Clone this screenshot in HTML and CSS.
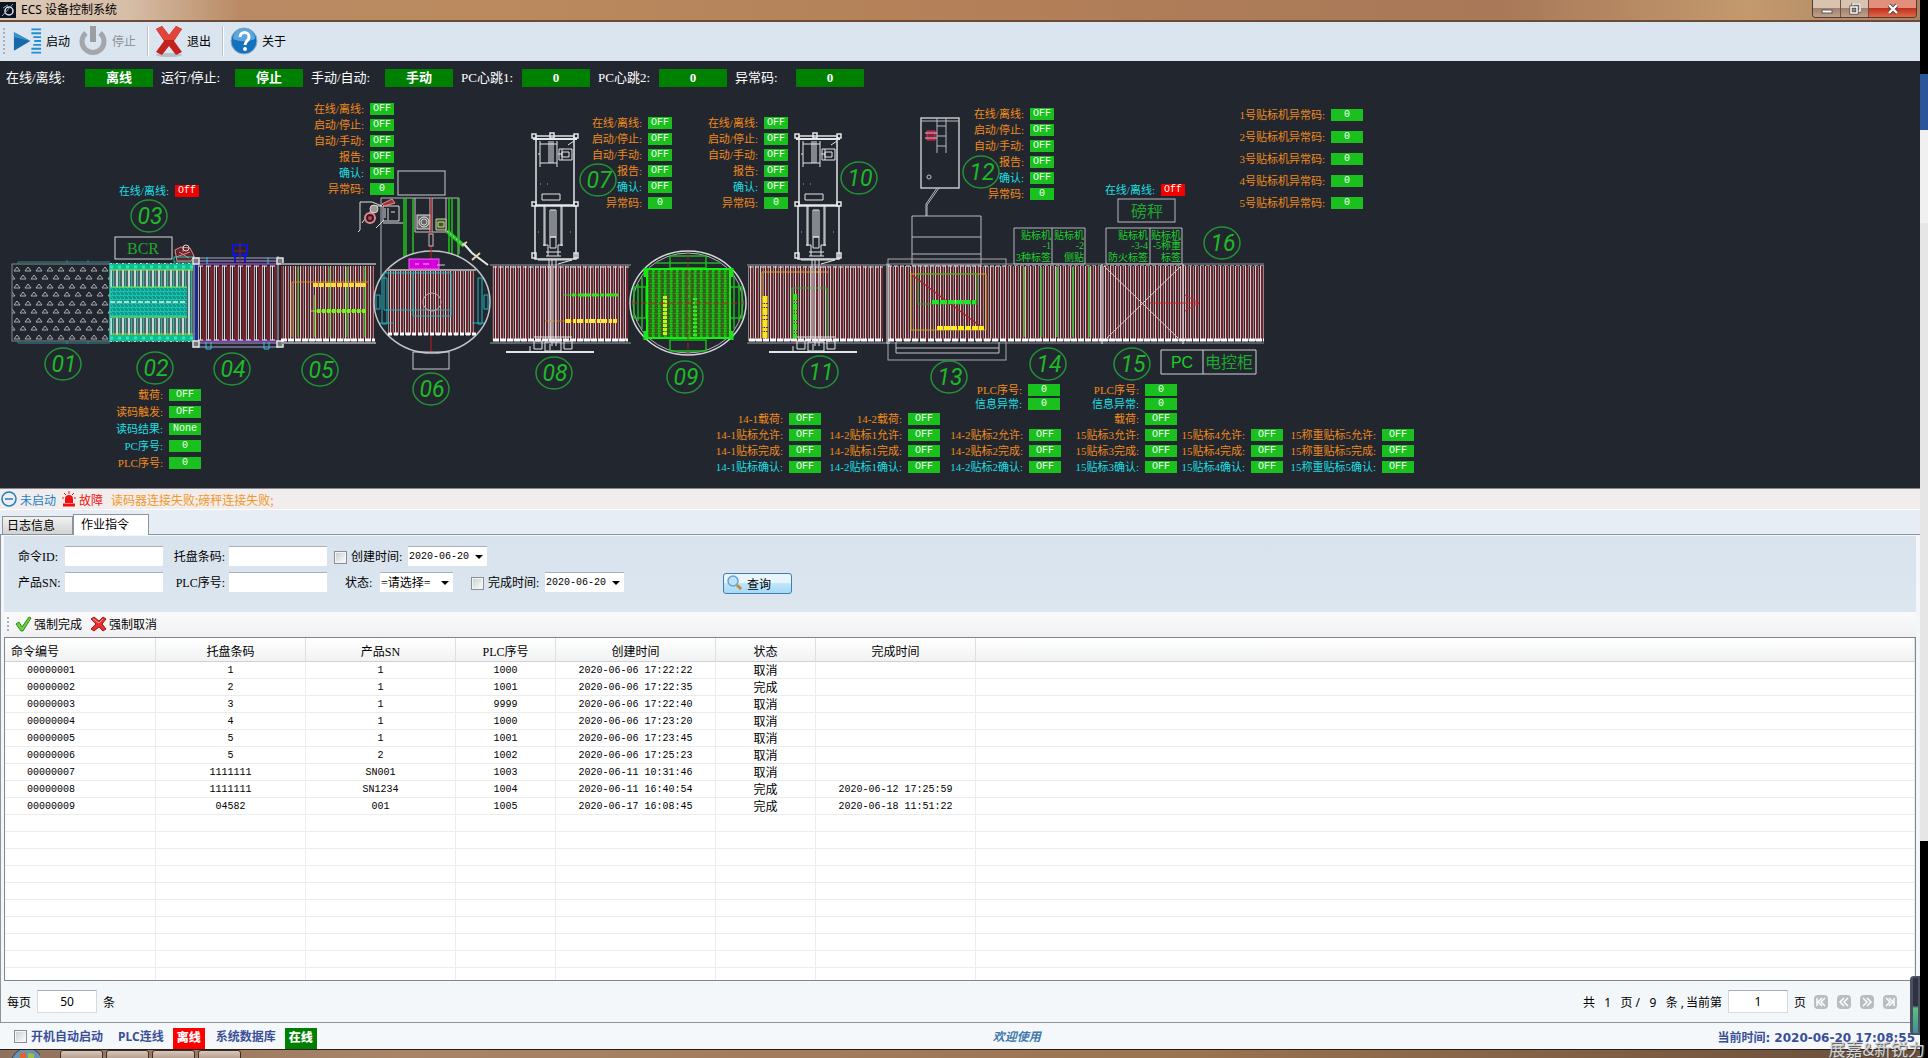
FILE: index.html
```html
<!DOCTYPE html>
<html lang="zh-CN">
<head>
    <meta charset="UTF-8">
    <meta name="viewport" content="width=device-width, initial-scale=1.0">
    <title>ECS 设备控制系统</title>
    <link rel="stylesheet" href="styles.css">
</head>
<body>
<div class="desktop">
    <div class="window">
        <header class="titlebar">
            <svg class="app-icon" width="16" height="16" viewBox="0 0 16 16"><rect width="16" height="16" fill="#0c1420"/><circle cx="9" cy="9" r="4" fill="none" stroke="#dfe6ee" stroke-width="1.5"/><path d="M2 14L13 2M3 6l5-3" stroke="#8fa2b8"/></svg>
            <h1>ECS 设备控制系统</h1>
            <div class="win-buttons">
                <button class="win-min" aria-label="最小化"><svg width="12" height="12" viewBox="0 0 12 12"><rect x="1" y="7" width="10" height="3" fill="#fff" stroke="#555"/></svg></button>
                <button class="win-max" aria-label="还原"><svg width="12" height="12" viewBox="0 0 12 12" fill="none"><path d="M4 3V1h7v7H9" stroke="#555" stroke-width="3"/><path d="M4 3V1h7v7H9" stroke="#fff" stroke-width="1.5"/><rect x="2" y="4" width="6" height="6" stroke="#444" stroke-width="3"/><rect x="2" y="4" width="6" height="6" stroke="#fff" stroke-width="1.5"/></svg></button>
                <button class="win-close" aria-label="关闭"><svg width="12" height="12" viewBox="0 0 12 12"><path d="M2 2l8 8M10 2l-8 8" stroke="#5a3a3a" stroke-width="4"/><path d="M2 2l8 8M10 2l-8 8" stroke="#fff" stroke-width="2.4"/></svg></button>
            </div>
        </header>

        <nav class="toolbar">
            <span class="grip"></span>
            <button>
                <svg width="29" height="28" viewBox="0 0 30 28"><path d="M1 5l17 9-17 10z" fill="#1668a8"/><path d="M1 5l17 9-17-4z" fill="#3b90cc"/><path d="M19 2h10M19 6h10M21 10h8M22 14h7M21 18h8M19 22h10M19 26h10" stroke="#1f8fd0" stroke-width="2"/></svg>
                启动
            </button>
            <button class="off" disabled>
                <svg width="30" height="30" viewBox="0 0 30 30" fill="none"><path d="M8 7a11 11 0 1 0 14 0" stroke="#a3a6aa" stroke-width="5"/><path d="M15 0v16" stroke="#9a9da1" stroke-width="6"/></svg>
                停止
            </button>
            <span class="sep"></span>
            <button>
                <svg width="28" height="32" viewBox="0 0 28 32"><ellipse cx="14" cy="30" rx="13" ry="2" fill="#b9bfc6"/><path d="M1 4l6-3 7 9 7-9 6 3-8 12 8 11-6 3-7-9-7 9-6-3 8-11z" fill="#c3211c"/><path d="M1 4l6-3 7 9 7-9 6 3-8 11H9z" fill="#e0443a"/></svg>
                退出
            </button>
            <span class="sep"></span>
            <button>
                <svg width="28" height="28" viewBox="0 0 28 28"><circle cx="14" cy="14" r="13" fill="#1471bd" stroke="#8fa9c0"/><path d="M3 12a11 11 0 0 1 22 0c-7 3-15 3-22 0z" fill="#5ba6de"/><path d="M10 10c0-6 9-6 9 0 0 4-4 4-4 8" fill="none" stroke="#fff" stroke-width="3"/><circle cx="15" cy="22" r="2" fill="#fff"/></svg>
                关于
            </button>
        </nav>

        <main class="monitor">
            <div class="stats">
                <div class="stat"><span>在线/离线:</span><b>离线</b></div>
                <div class="stat"><span>运行/停止:</span><b>停止</b></div>
                <div class="stat"><span>手动/自动:</span><b>手动</b></div>
                <div class="stat short"><span>PC心跳1:</span><b>0</b></div>
                <div class="stat short"><span>PC心跳2:</span><b>0</b></div>
                <div class="stat short"><span>异常码:</span><b>0</b></div>
            </div>

            <!-- conveyor line layout -->
            <svg class="line" width="1420" height="427" viewBox="0 61 1420 427">
                <defs>
                    <pattern id="rollers" width="5" height="80" patternUnits="userSpaceOnUse">
                        <rect width="5" height="80" fill="#30242b"/>
                        <rect x="0" width="1" height="80" fill="#d6cdcf"/>
                        <rect x="1" width="2" height="80" fill="#76252f"/>
                        <rect x="3" width="1" height="80" fill="#938489"/>
                    </pattern>
                    <pattern id="rollers-wide" width="8" height="80" patternUnits="userSpaceOnUse">
                        <rect width="8" height="80" fill="#2b2329"/>
                        <rect x="0" width="1" height="80" fill="#e4e0e1"/>
                        <rect x="2" width="4" height="80" fill="#6d2630"/>
                        <rect x="6" width="1" height="80" fill="#b5abae"/>
                    </pattern>
                    <pattern id="tri" x="12" y="265" width="11" height="17" patternUnits="userSpaceOnUse">
                        <path d="M2 6l3-4 3 4zM-3 14l3-4 3 4zM8 14l3-4 3 4z" fill="none" stroke="#a9acb0"/>
                    </pattern>
                    <pattern id="strips" x="110" width="6" height="80" patternUnits="userSpaceOnUse">
                        <rect width="6" height="80" fill="#4b6468"/>
                        <rect width="2" height="80" fill="#c9d6d2"/>
                        <rect x="3" width="1" height="80" fill="#22b89a"/>
                    </pattern>
                    <pattern id="mesh" x="646" y="268" width="6" height="5" patternUnits="userSpaceOnUse">
                        <rect width="6" height="5" fill="#217318"/>
                        <path d="M0 0h6M0 3h3M1 0v5" stroke="#14e014"/>
                        <path d="M4 0v5" stroke="#6a3a2a"/>
                    </pattern>
                    <pattern id="teal" width="4" height="4" patternUnits="userSpaceOnUse">
                        <rect width="4" height="4" fill="#16c4a8"/>
                        <path d="M0 0h3M1 2h3" stroke="#0e6a78"/>
                    </pattern>

                    <!-- lifting labeler, stations 07 and 10 -->
                    <g id="lift" fill="none" stroke="#e4e6e8">
                        <path d="M536 136h38v69h-38zM535 206h41v53h-41z" stroke-width="1.5"/>
                        <path d="M533 139h44" stroke-width="2"/>
                        <path d="M532 134h4v4h-4zM574 134h4v4h-4zM550 133h4v5h-4zM532 202h4v4h-4zM574 202h4v4h-4zM532 253h4v5h-4zM574 253h4v5h-4z" stroke-width="1.5"/>
                        <path d="M540 141v26M557 141v26M540 144h17M540 163h17M549 141v22M551 141v22M553 141v22M538 154h2"/>
                        <path d="M559 149h13v11h-13zM562 152h7v5h-7zM562 149v11M568 145l6-4M558 154h4"/>
                        <path d="M542 194h18v6h-18z"/>
                        <path d="M544 206v40M562 206v40M550 210h6v27h-6zM552 210v27M554 210v27M545 206v40M561 206v40M550 237h6v11h-6z"/>
                        <path d="M543 245h5v11M563 245h-5v11M546 252h15M546 256h15M538 260h34M549 260v80M552 260v86M556 260v86M572 260l-14 4"/>
                        <path d="M534 337h38M534 341h8v8h-8zM564 341h8v8h-8zM545 342h16v9h-16zM550 344v6M530 346v7"/>
                        <path d="M506 352h88" stroke-width="2"/>
                        <path d="M540 184h1M547 184h1M570 232h1M538 232h1" stroke="#aaa"/>
                    </g>
                </defs>

                <!-- 01 -->
                <rect x="12" y="264" width="98" height="77" fill="url(#tri)" stroke="#85888d"/>
                <path d="M18 264v-2h92M18 341v2h92M67 260v3M88 260v3M67 341v3M88 341v3" fill="none" stroke="#2c8b8f"/>

                <!-- 02 -->
                <rect x="110" y="263" width="83" height="79" fill="url(#strips)"/>
                <rect x="110" y="264" width="83" height="6" fill="#10c08c"/>
                <rect x="110" y="335" width="83" height="6" fill="#10c08c"/>
                <path d="M110 267h83M110 338h83" stroke="#22e8d0" stroke-width="3" stroke-dasharray="3 5"/>
                <path d="M110 270h83M110 334h83" stroke="#b6d838"/>
                <rect x="110" y="287" width="77" height="31" fill="url(#teal)"/>
                <path d="M110 287h77M110 317h77" stroke="#7fe84a"/>
                <path d="M110 302h77" stroke="#b8d8c8" stroke-width="2" stroke-dasharray="5 2"/>
                <path d="M110 263v79" stroke="#22d8c0"/>
                <rect x="115" y="237" width="57" height="22" fill="none" stroke="#d5d7da"/>
                <path d="M175 250l6-3 9 1 4 8-3 5h-14zM179 252l10 6M183 247v5M176 257l14-5" fill="#5c2530" stroke="#f08a8a"/>
                <circle cx="186" cy="248" r="3" fill="none" stroke="#e8d8d8"/>
                <path d="M174 257h20v5h-20z" fill="none" stroke="#20c8a8"/>

                <!-- 04 -->
                <rect x="194" y="262" width="4" height="80" fill="#1c2a8c"/>
                <rect x="198" y="266" width="79" height="74" fill="url(#rollers-wide)"/>
                <path d="M196 258h82M196 261h82M196 343h82M196 347h82" stroke="#a9a0d8"/>
                <path d="M198 264h80M198 341h80" stroke="#7a3a9c" stroke-width="2"/>
                <path d="M198 266h79M198 340h79" stroke="#eee" stroke-dasharray="5 3"/>
                <path d="M278 256v92M194 256v92" stroke="#b8bcc8"/>
                <path d="M193 258h6v6h-6zM277 258h6v6h-6zM193 341h6v6h-6zM277 341h6v6h-6z" fill="#777" stroke="#e4e4e4" stroke-width="1.5"/>
                <path d="M206 342v7h5v-7M264 342v7h5v-7M207 257v7M268 257v7" fill="none" stroke="#2cc8d8"/>
                <path d="M233 245h14v10h-14zM235 255v7M245 255v7" fill="none" stroke="#1414d0" stroke-width="2"/>
                <path d="M240 243v20M234 251h12" stroke="#7a1c50"/>

                <!-- 05 -->
                <rect x="281" y="266" width="94" height="75" fill="url(#rollers)"/>
                <path d="M281 264h95M281 343h95" stroke="#8e9297" stroke-width="2"/>
                <path d="M281 340h94" stroke="#fff" stroke-width="3" stroke-dasharray="6 1"/>
                <path d="M298 267v70M330 267v70M347 267v70M365 267v70" stroke="#33d81e"/>
                <path d="M292 337v-55h76" fill="none" stroke="#d8851c"/>
                <path d="M313 285h53" stroke="#ffd83c" stroke-width="4" stroke-dasharray="5 1"/>
                <path d="M311 311h55M315 295v42" fill="none" stroke="#8af028"/>
                <path d="M317 311h49" stroke="#7af028" stroke-width="4" stroke-dasharray="4 1"/>

                <!-- 06 wrapping turntable -->
                <rect x="398" y="171" width="47" height="24" fill="none" stroke="#c8cacd"/>
                <path d="M381 290v-92h78v56" fill="none" stroke="#b4b7bb"/>
                <path d="M404 198v59M406 198v59M413 198v58M449 198v56M452 198v56M458 198v58" stroke="#22c41e" stroke-width="1.5"/>
                <path d="M415 198v34h31v-34M430 198v34M432 198v34" fill="none" stroke="#d7c3c3"/>
                <rect x="417" y="215" width="13" height="14" fill="#666" stroke="#ddd"/>
                <circle cx="424" cy="222" r="5" fill="none" stroke="#e8e8e8"/>
                <circle cx="424" cy="222" r="3" fill="none" stroke="#d0d0d0"/>
                <path d="M436 219h10v11h-10zM438 222h6v5h-6z" fill="#46542c" stroke="#c5d8a0"/>
                <path d="M360 202h12l10 4h-8l-12 17 M360 202v28l-2 2" fill="none" stroke="#d9e4dc"/>
                <circle cx="370" cy="218" r="5" fill="#401820" stroke="#d88a94" stroke-width="2"/>
                <circle cx="370" cy="218" r="2" fill="#b8485c"/>
                <circle cx="374" cy="209" r="4" fill="#999" stroke="#f4caca"/>
                <path d="M383 206h16v15h-16zM385 208v10M388 208v12M391 212h4M383 223h20M376 228l8-8" fill="none" stroke="#ddd"/>
                <path d="M382 204l10-5 3 4-11 3z" fill="#9c3038" stroke="#f09090"/>
                <ellipse cx="432" cy="302" rx="58" ry="51" fill="#22272f" stroke="#c2c4c8" stroke-width="1.5"/>
                <path d="M431 198v154" stroke="#c8161c"/>
                <rect x="388" y="271" width="87" height="64" fill="url(#rollers)"/>
                <path d="M386 270h90" stroke="#9da0a5" stroke-width="2"/>
                <path d="M388 334h88" stroke="#fff" stroke-width="3" stroke-dasharray="4 2"/>
                <rect x="429" y="234" width="4" height="12" fill="#22272f" stroke="#d6b8b8"/>
                <rect x="409" y="259" width="30" height="10" fill="#d400dc" stroke="#ff5cff"/>
                <path d="M415 264h4M423 264h6M437 265h8" stroke="#f6b0f6"/>
                <path d="M384 273h67v37h-67zM413 273v43h38v-6M382 278h5v46h-5zM478 278h4v46h-4zM376 295h4v14h-4zM484 295h4v14h-4zM380 323h13M472 323h12" fill="none" stroke="#1fb4bc"/>
                <circle cx="432" cy="302" r="9" fill="none" stroke="#c9a8a0"/>
                <rect x="413" y="352" width="36" height="17" fill="none" stroke="#c8cacd"/>
                <path d="M447 231l17 15" stroke="#25c42a" stroke-width="4"/>
                <path d="M447 231l17 15" stroke="#b8dcb0" stroke-dasharray="2 2"/>
                <path d="M464 244l8 9 4 3 12 9" fill="none" stroke="#e8ece0" stroke-width="2"/>
                <path d="M472 260l8-7M462 245l5-3" stroke="#e8d0a0" stroke-width="2"/>

                <!-- 07 / 08 -->
                <rect x="492" y="266" width="136" height="75" fill="url(#rollers)"/>
                <path d="M490 265h141M490 343h141" stroke="#9da0a5"/>
                <path d="M493 267h136" stroke="#ddd" stroke-dasharray="4 2"/>
                <path d="M493 340h135" stroke="#fff" stroke-width="3" stroke-dasharray="6 1"/>
                <path d="M563 295h54" stroke="#35d41c"/>
                <path d="M572 295h46" stroke="#35e41c" stroke-width="3" stroke-dasharray="4 2 7 1"/>
                <path d="M545 321h72" stroke="#b06a18"/>
                <path d="M565 321h52" stroke="#ffe63a" stroke-width="4" stroke-dasharray="6 2 3 1"/>
                <use href="#lift"/>

                <!-- 09 rotary table -->
                <ellipse cx="688" cy="303" rx="58" ry="52" fill="none" stroke="#d6d8da" stroke-width="1.5"/>
                <ellipse cx="688" cy="303" rx="55" ry="50" fill="none" stroke="#b4b6ba"/>
                <path d="M670 256h36v12h-36zM656 263h64M670 340h36v11h-36zM634 287h12v31h-12zM730 287h12v31h-12zM642 277v52M734 277v52M638 284v37M739 284v37" fill="none" stroke="#1fb81e" stroke-width="1.5"/>
                <rect x="647" y="269" width="83" height="69" fill="url(#mesh)" stroke="#12f012" stroke-width="2"/>
                <path d="M645 268v9M645 331v9M732 268v9M732 331v9" stroke="#15e815" stroke-width="3"/>
                <path d="M665 296v40" stroke="#c8f01c" stroke-width="4" stroke-dasharray="3 1"/>
                <path d="M695 298v38" stroke="#2cf020" stroke-width="4" stroke-dasharray="2 2"/>
                <path d="M632 303h112M688 253v100" stroke="#a32a1c" stroke-dasharray="6 3"/>

                <!-- 10 / 11 -->
                <rect x="748" y="266" width="135" height="75" fill="url(#rollers)"/>
                <path d="M747 265h139M747 343h139" stroke="#9da0a5"/>
                <path d="M749 267h134" stroke="#ddd" stroke-dasharray="4 2"/>
                <path d="M749 340h134" stroke="#fff" stroke-width="3" stroke-dasharray="6 1"/>
                <path d="M762 338v-66h66" fill="none" stroke="#d8a020"/>
                <path d="M765 296v42" stroke="#f4e820" stroke-width="5" stroke-dasharray="7 1 3 1"/>
                <path d="M792 338v-50h35v50" fill="none" stroke="#22a81e"/>
                <path d="M795 294v44" stroke="#28e81e" stroke-width="4" stroke-dasharray="6 1 2 1"/>
                <use href="#lift" x="263"/>

                <!-- 12 / 13 -->
                <rect x="921" y="118" width="38" height="70" fill="none" stroke="#c2c4c8" stroke-width="1.5"/>
                <path d="M937 118v35M946 118v35M921 121h38M937 126h9M937 136h9M937 146h9M939 188l-12 17v11M937 188l-11 16v12" fill="none" stroke="#b8babe"/>
                <path d="M927 131h8v9h-8z" fill="#8c1c3c" stroke="#d8305c"/>
                <path d="M925 133h12M925 138h12" stroke="#e8b8c4"/>
                <circle cx="929" cy="177" r="2" fill="none" stroke="#c2c4c8"/>
                <path d="M912 216h69v49h-69zM912 237h69M912 254h69" fill="none" stroke="#b8babe"/>
                <rect x="888" y="259" width="118" height="101" fill="none" stroke="#a8abb0"/>
                <rect x="887" y="266" width="121" height="75" fill="url(#rollers)"/>
                <path d="M886 264h378M886 343h378" stroke="#8e9297"/>
                <path d="M888 266h376" stroke="#e4e4e4" stroke-dasharray="4 2"/>
                <path d="M888 340h120" stroke="#fff" stroke-width="3" stroke-dasharray="6 2"/>
                <path d="M896 342v11h103v-11M896 348h103" fill="none" stroke="#c2c4c8"/>
                <path d="M887 264v80M889 264v80" stroke="#d6d8da"/>
                <rect x="911" y="274" width="75" height="56" fill="none" stroke="#c8a418"/>
                <rect x="918" y="274" width="59" height="30" fill="none" stroke="#22a81e"/>
                <path d="M912 275l72 54" stroke="#b01c28" stroke-width="1.5"/>
                <path d="M932 302h44" stroke="#1ee82c" stroke-width="4" stroke-dasharray="7 1"/>
                <path d="M937 328h47" stroke="#ffee1e" stroke-width="4" stroke-dasharray="6 1"/>

                <!-- 14 -->
                <rect x="1008" y="266" width="94" height="75" fill="url(#rollers)"/>
                <path d="M1008 340h94" stroke="#fff" stroke-width="3" stroke-dasharray="6 1"/>
                <path d="M1024 267v70M1041 267v70M1057 267v70M1073 267v70M1089 267v70" stroke="#3fc83a" stroke-width="1.5"/>
                <path d="M1014 228h71v36h-71zM1052 228v36" fill="none" stroke="#b4b6ba"/>

                <!-- 15 / 16 -->
                <rect x="1102" y="266" width="162" height="75" fill="url(#rollers)"/>
                <path d="M1102 340h162" stroke="#fff" stroke-width="3" stroke-dasharray="6 1"/>
                <path d="M1102 264v80M1183 264v80" stroke="#eee"/>
                <path d="M1104 266l74 72M1181 266l-74 72" stroke="#dccaca"/>
                <path d="M1150 303h49M1185 295l14 8-14 8" fill="none" stroke="#c8222a"/>
                <path d="M1106 228h76v36h-76zM1150 228v36" fill="none" stroke="#b8babe"/>
                <rect x="1118" y="199" width="57" height="23" fill="none" stroke="#b8babe"/>
                <path d="M1161 350h95v24h-95zM1203 350v24" fill="none" stroke="#d0d2d5"/>

                <g class="box-text">
                    <text class="serif" x="143" y="254">BCR</text>
                    <text class="serif" x="1147" y="217">磅秤</text>
                    <text class="pc" x="1182" y="368">PC</text>
                    <text class="serif" x="1229" y="368">电控柜</text>
                </g>
                <g class="tag-text">
                    <text x="1051" y="239">贴标机</text><text x="1051" y="249">-1</text><text x="1051" y="261">3种标签</text>
                    <text x="1084" y="239">贴标机</text><text x="1084" y="249">-2</text><text x="1084" y="261">侧贴</text>
                    <text x="1148" y="239">贴标机</text><text x="1148" y="249">-3-4</text><text x="1148" y="261">防火标签</text>
                    <text x="1181" y="239">贴标机</text><text x="1181" y="249">-5称重</text><text x="1181" y="261">标签</text>
                </g>

                <g class="station">
                    <ellipse cx="63" cy="364" rx="18" ry="16"/><text x="64" y="372">01</text>
                    <ellipse cx="155" cy="368" rx="18" ry="16"/><text x="156" y="376">02</text>
                    <ellipse cx="149" cy="216" rx="18" ry="16"/><text x="150" y="224">03</text>
                    <ellipse cx="232" cy="369" rx="18" ry="16"/><text x="233" y="377">04</text>
                    <ellipse cx="320" cy="370" rx="18" ry="16"/><text x="321" y="378">05</text>
                    <ellipse cx="431" cy="389" rx="18" ry="16"/><text x="432" y="397">06</text>
                    <ellipse cx="598" cy="180" rx="18" ry="16"/><text x="599" y="188">07</text>
                    <ellipse cx="554" cy="373" rx="18" ry="16"/><text x="555" y="381">08</text>
                    <ellipse cx="685" cy="377" rx="18" ry="16"/><text x="686" y="385">09</text>
                    <ellipse cx="859" cy="178" rx="18" ry="16"/><text x="860" y="186">10</text>
                    <ellipse cx="820" cy="372" rx="18" ry="16"/><text x="821" y="380">11</text>
                    <ellipse cx="981" cy="172" rx="18" ry="16"/><text x="982" y="180">12</text>
                    <ellipse cx="949" cy="377" rx="18" ry="16"/><text x="950" y="385">13</text>
                    <ellipse cx="1048" cy="364" rx="18" ry="16"/><text x="1049" y="372">14</text>
                    <ellipse cx="1132" cy="364" rx="18" ry="16"/><text x="1133" y="372">15</text>
                    <ellipse cx="1222" cy="243" rx="18" ry="16"/><text x="1223" y="251">16</text>
                </g>
            </svg>

            <dl class="io io-03"><dt class="ack">在线/离线:</dt><dd class="bad">Off</dd></dl>
            <dl class="io io-scale"><dt class="ack">在线/离线:</dt><dd class="bad">Off</dd></dl>
            <dl class="io io-06">
                <dt>在线/离线:</dt><dd>OFF</dd>
                <dt>启动/停止:</dt><dd>OFF</dd>
                <dt>自动/手动:</dt><dd>OFF</dd>
                <dt>报告:</dt><dd>OFF</dd>
                <dt class="ack">确认:</dt><dd>OFF</dd>
                <dt>异常码:</dt><dd>0</dd>
            </dl>
            <dl class="io io-07">
                <dt>在线/离线:</dt><dd>OFF</dd>
                <dt>启动/停止:</dt><dd>OFF</dd>
                <dt>自动/手动:</dt><dd>OFF</dd>
                <dt>报告:</dt><dd>OFF</dd>
                <dt class="ack">确认:</dt><dd>OFF</dd>
                <dt>异常码:</dt><dd>0</dd>
            </dl>
            <dl class="io io-10">
                <dt>在线/离线:</dt><dd>OFF</dd>
                <dt>启动/停止:</dt><dd>OFF</dd>
                <dt>自动/手动:</dt><dd>OFF</dd>
                <dt>报告:</dt><dd>OFF</dd>
                <dt class="ack">确认:</dt><dd>OFF</dd>
                <dt>异常码:</dt><dd>0</dd>
            </dl>
            <dl class="io io-12">
                <dt>在线/离线:</dt><dd>OFF</dd>
                <dt>启动/停止:</dt><dd>OFF</dd>
                <dt>自动/手动:</dt><dd>OFF</dd>
                <dt>报告:</dt><dd>OFF</dd>
                <dt class="ack">确认:</dt><dd>OFF</dd>
                <dt>异常码:</dt><dd>0</dd>
            </dl>
            <dl class="io wide io-02">
                <dt>载荷:</dt><dd>OFF</dd>
                <dt>读码触发:</dt><dd>OFF</dd>
                <dt class="ack">读码结果:</dt><dd>None</dd>
                <dt class="ack">PC序号:</dt><dd>0</dd>
                <dt>PLC序号:</dt><dd>0</dd>
            </dl>
            <dl class="io wide io-codes">
                <dt>1号贴标机异常码:</dt><dd>0</dd>
                <dt>2号贴标机异常码:</dt><dd>0</dd>
                <dt>3号贴标机异常码:</dt><dd>0</dd>
                <dt>4号贴标机异常码:</dt><dd>0</dd>
                <dt>5号贴标机异常码:</dt><dd>0</dd>
            </dl>
            <dl class="io wide tight io-14">
                <dt>PLC序号:</dt><dd>0</dd>
                <dt class="ack">信息异常:</dt><dd>0</dd>
            </dl>
            <dl class="io wide tight io-15">
                <dt>PLC序号:</dt><dd>0</dd>
                <dt class="ack">信息异常:</dt><dd>0</dd>
            </dl>
            <dl class="io wide io-14-1">
                <dt>14-1载荷:</dt><dd>OFF</dd>
                <dt>14-1贴标允许:</dt><dd>OFF</dd>
                <dt>14-1贴标完成:</dt><dd>OFF</dd>
                <dt class="ack">14-1贴标确认:</dt><dd>OFF</dd>
            </dl>
            <dl class="io wide io-14-2a">
                <dt>14-2载荷:</dt><dd>OFF</dd>
                <dt>14-2贴标1允许:</dt><dd>OFF</dd>
                <dt>14-2贴标1完成:</dt><dd>OFF</dd>
                <dt class="ack">14-2贴标1确认:</dt><dd>OFF</dd>
            </dl>
            <dl class="io wide io-14-2b">
                <dt>14-2贴标2允许:</dt><dd>OFF</dd>
                <dt>14-2贴标2完成:</dt><dd>OFF</dd>
                <dt class="ack">14-2贴标2确认:</dt><dd>OFF</dd>
            </dl>
            <dl class="io wide io-15-3">
                <dt>载荷:</dt><dd>OFF</dd>
                <dt>15贴标3允许:</dt><dd>OFF</dd>
                <dt>15贴标3完成:</dt><dd>OFF</dd>
                <dt class="ack">15贴标3确认:</dt><dd>OFF</dd>
            </dl>
            <dl class="io wide io-15-4">
                <dt>15贴标4允许:</dt><dd>OFF</dd>
                <dt>15贴标4完成:</dt><dd>OFF</dd>
                <dt class="ack">15贴标4确认:</dt><dd>OFF</dd>
            </dl>
            <dl class="io wide io-15-5">
                <dt>15称重贴标5允许:</dt><dd>OFF</dd>
                <dt>15称重贴标5完成:</dt><dd>OFF</dd>
                <dt class="ack">15称重贴标5确认:</dt><dd>OFF</dd>
            </dl>
        </main>

        <div class="alarm">
            <svg width="16" height="16" viewBox="0 0 16 16" fill="none" stroke="#1b7fc4"><circle cx="8" cy="8" r="7" stroke-width="1.5"/><path d="M4 8h8" stroke-width="1.5"/></svg>
            <span class="idle">未启动</span>
            <svg width="14" height="16" viewBox="0 0 14 16"><path d="M3 12V8a4 4 0 0 1 8 0v4z" fill="#f01010"/><path d="M1 14h12" stroke="#f01010" stroke-width="3"/><path d="M7 0v3M2 2l2 2M12 2l-2 2M0 7h2M12 7h2" stroke="#f01010"/></svg>
            <span class="fault">故障</span>
            <span class="detail">读码器连接失败;磅秤连接失败;</span>
        </div>

        <div class="tabs" role="tablist">
            <button role="tab">日志信息</button>
            <button role="tab" class="active" aria-selected="true">作业指令</button>
        </div>

        <section class="panel">
            <form class="filter">
                <div class="filter-row">
                    <label for="cmdId">命令ID:</label><input type="text" id="cmdId">
                    <label for="pallet" class="mid">托盘条码:</label><input type="text" id="pallet">
                    <input type="checkbox" id="useCreated"><label for="useCreated">创建时间:</label>
                    <span class="drop"><select aria-label="创建时间"><option>2020-06-20</option></select></span>
                </div>
                <div class="filter-row">
                    <label for="sn">产品SN:</label><input type="text" id="sn">
                    <label for="plcNo" class="mid">PLC序号:</label><input type="text" id="plcNo">
                    <label for="state" class="state">状态:</label>
                    <span class="drop state-drop"><select id="state"><option>=请选择=</option></select></span>
                    <input type="checkbox" id="useDone" class="done"><label for="useDone">完成时间:</label>
                    <span class="drop"><select aria-label="完成时间"><option>2020-06-20</option></select></span>
                    <button type="button" class="query">
                        <svg width="16" height="16" viewBox="0 0 16 16"><path d="M10 10l4 4" stroke="#c98a3a" stroke-width="3"/><circle cx="6" cy="6" r="5" fill="#bfe2f8" stroke="#6aa0cc" stroke-width="1.5"/></svg>
                        查询
                    </button>
                </div>
            </form>

            <div class="actions">
                <span class="grip"></span>
                <button><svg width="17" height="16" viewBox="0 0 17 16"><path d="M1 8l3-2 3 5 7-10 2 1-8 13H6z" fill="#6ed23c" stroke="#2c8c1c"/></svg>强制完成</button>
                <button><svg width="17" height="16" viewBox="0 0 17 16"><path d="M1 3l3-2 5 4 4-4 3 2-4 5 4 5-3 2-4-4-5 4-3-2 5-5z" fill="#e83030" stroke="#a01818"/><path d="M3 3l6 4 4-4" fill="none" stroke="#ff9a9a"/></svg>强制取消</button>
            </div>

            <div class="grid">
                <table>
                    <colgroup><col class="c-id"><col class="c-m"><col class="c-m"><col class="c-s"><col class="c-t"><col class="c-s"><col class="c-t"><col></colgroup>
                    <thead>
                        <tr><th>命令编号</th><th>托盘条码</th><th>产品SN</th><th>PLC序号</th><th>创建时间</th><th>状态</th><th>完成时间</th><th></th></tr>
                    </thead>
                    <tbody>
                        <tr><td>00000001</td><td>1</td><td>1</td><td>1000</td><td>2020-06-06 17:22:22</td><td>取消</td><td></td><td></td></tr>
                        <tr><td>00000002</td><td>2</td><td>1</td><td>1001</td><td>2020-06-06 17:22:35</td><td>完成</td><td></td><td></td></tr>
                        <tr><td>00000003</td><td>3</td><td>1</td><td>9999</td><td>2020-06-06 17:22:40</td><td>取消</td><td></td><td></td></tr>
                        <tr><td>00000004</td><td>4</td><td>1</td><td>1000</td><td>2020-06-06 17:23:20</td><td>取消</td><td></td><td></td></tr>
                        <tr><td>00000005</td><td>5</td><td>1</td><td>1001</td><td>2020-06-06 17:23:45</td><td>取消</td><td></td><td></td></tr>
                        <tr><td>00000006</td><td>5</td><td>2</td><td>1002</td><td>2020-06-06 17:25:23</td><td>取消</td><td></td><td></td></tr>
                        <tr><td>00000007</td><td>1111111</td><td>SN001</td><td>1003</td><td>2020-06-11 10:31:46</td><td>取消</td><td></td><td></td></tr>
                        <tr><td>00000008</td><td>1111111</td><td>SN1234</td><td>1004</td><td>2020-06-11 16:40:54</td><td>完成</td><td>2020-06-12 17:25:59</td><td></td></tr>
                        <tr><td>00000009</td><td>04582</td><td>001</td><td>1005</td><td>2020-06-17 16:08:45</td><td>完成</td><td>2020-06-18 11:51:22</td><td></td></tr>
                        <tr><td></td><td></td><td></td><td></td><td></td><td></td><td></td><td></td></tr>
                        <tr><td></td><td></td><td></td><td></td><td></td><td></td><td></td><td></td></tr>
                        <tr><td></td><td></td><td></td><td></td><td></td><td></td><td></td><td></td></tr>
                        <tr><td></td><td></td><td></td><td></td><td></td><td></td><td></td><td></td></tr>
                        <tr><td></td><td></td><td></td><td></td><td></td><td></td><td></td><td></td></tr>
                        <tr><td></td><td></td><td></td><td></td><td></td><td></td><td></td><td></td></tr>
                        <tr><td></td><td></td><td></td><td></td><td></td><td></td><td></td><td></td></tr>
                        <tr><td></td><td></td><td></td><td></td><td></td><td></td><td></td><td></td></tr>
                        <tr><td></td><td></td><td></td><td></td><td></td><td></td><td></td><td></td></tr>
                        <tr><td></td><td></td><td></td><td></td><td></td><td></td><td></td><td></td></tr>
                    </tbody>
                </table>
            </div>

            <div class="pager">
                <label for="pageSize">每页</label><input type="text" id="pageSize" value="50"><span>条</span>
                <span class="total">共&nbsp;&nbsp; 1 &nbsp;&nbsp;页 /&nbsp;&nbsp; 9 &nbsp;&nbsp;条 ,</span>
                <label for="pageNo">当前第</label><input type="text" id="pageNo" value="1"><span>页</span>
                <div class="nav">
                    <button aria-label="首页"><svg width="14" height="14" viewBox="0 0 14 14"><path d="M3 3v8M11 3L7 7l4 4M8 3L4 7l4 4"/></svg></button>
                    <button aria-label="上一页"><svg width="14" height="14" viewBox="0 0 14 14"><path d="M7 3L3 7l4 4M11 3L7 7l4 4"/></svg></button>
                    <button aria-label="下一页"><svg width="14" height="14" viewBox="0 0 14 14"><path d="M3 3l4 4-4 4M7 3l4 4-4 4"/></svg></button>
                    <button aria-label="末页"><svg width="14" height="14" viewBox="0 0 14 14"><path d="M3 3l4 4-4 4M6 3l4 4-4 4M11 3v8"/></svg></button>
                </div>
            </div>
        </section>

        <footer class="statusbar">
            <input type="checkbox" id="autorun"><label for="autorun">开机自动启动</label>
            <span class="conn">PLC连线</span><b class="badge red">离线</b>
            <span class="conn">系统数据库</span><b class="badge green">在线</b>
            <span class="welcome">欢迎使用</span>
            <span class="clock">当前时间: 2020-06-20 17:08:55</span>
        </footer>

        <div class="taskbar">
            <svg width="40" height="9" viewBox="0 0 40 9"><circle cx="27" cy="14" r="16" fill="#6c93ae" stroke="#27465c"/><path d="M20 9V4l6-2v7z" fill="#e0642c"/><path d="M28 9V3l6 1v5z" fill="#9cc048"/></svg>
            <i></i><i></i><i></i><i></i>
        </div>
        <div class="gadget"></div>
    </div>
    <div class="edge"><i class="e-black"></i><i class="e-blue"></i><i class="e-light"></i><i class="e-white"></i><i class="e-rest"></i></div>
    <div class="watermark">展嘉&amp;新锐力</div>
</div>
</body>
</html>
```
FILE: styles.css
```css
* {
    box-sizing: border-box;
    margin: 0;
    padding: 0;
}

body {
    font-family: "Liberation Serif", "Noto Sans CJK SC", sans-serif;
    font-size: 12px;
    color: #000;
    overflow: hidden;
}

button, input, select {
    font: inherit;
    color: inherit;
}

button {
    border: none;
    background: none;
    white-space: nowrap;
}

.desktop {
    display: flex;
    height: 100vh;
    position: relative;
}

.window {
    flex: 1;
    min-width: 0;
    display: flex;
    flex-direction: column;
    position: relative;
    background: #e6edf5;
}

/* title bar */
.titlebar {
    height: 22px;
    display: flex;
    align-items: center;
    background: linear-gradient(90deg, #dcc9b8 0, #d6bda6 130px, #b98a64 240px, #bb8a5e 500px, #b27f58 1000px, #a87858 1500px, #c39a6e 1750px, #a98262 100%);
    border-bottom: 2px solid #6b4a38;
}

.titlebar h1 {
    flex: 1;
    margin-left: 5px;
    font: 12px/20px "Noto Sans", "Noto Sans CJK SC", sans-serif;
}

.win-buttons {
    display: flex;
    align-self: flex-start;
    margin-right: 3px;
    height: 18px;
    border: 1px solid #553a30;
    border-top: none;
    border-radius: 0 0 4px 4px;
    overflow: hidden;
}

.win-buttons button {
    width: 28px;
    display: flex;
    align-items: center;
    justify-content: center;
    border-right: 1px solid #6b5044;
    background: linear-gradient(#d9c3b0 45%, #a08170 50%, #c0a28a);
}

.win-buttons .win-close {
    width: 47px;
    border-right: none;
    background: linear-gradient(#e2907c 45%, #c0301a 50%, #e0684a);
}

/* main toolbar */
.toolbar {
    height: 39px;
    display: flex;
    align-items: center;
    padding: 0 0 2px 3px;
    background: #dbe5ef;
    font: 12px "Noto Sans CJK SC", sans-serif;
}

.toolbar button {
    display: flex;
    align-items: center;
    gap: 4px;
    margin-left: 8px;
}

.toolbar .off {
    color: #8b9096;
}

.grip {
    width: 2px;
    height: 26px;
    background: repeating-linear-gradient(#a9b2bc 0 2px, transparent 2px 4px);
}

.sep {
    width: 2px;
    height: 30px;
    margin-left: 11px;
    background: #b9c2cc;
    border-right: 1px solid #fff;
}

.toolbar .sep + button {
    margin-left: 6px;
}

/* dark monitor area */
.monitor {
    height: 428px;
    position: relative;
    overflow: hidden;
    background: #22272f;
    border-bottom: 1px solid #8a8588;
}

.stats {
    display: flex;
    gap: 8px;
    padding: 8px 0 0 6px;
    color: #fff;
    font-size: 13px;
    line-height: 18px;
}

.stat {
    display: flex;
}

.stat span {
    width: 74px;
    white-space: nowrap;
}

.stat:first-child span {
    width: 79px;
}

.stat.short span {
    width: 61px;
}

.stat b {
    width: 68px;
    text-align: center;
    background: #008000;
}

.line {
    position: absolute;
    left: 0;
    top: 0;
}

.station ellipse {
    fill: none;
    stroke: #229436;
    stroke-width: 1.5;
}

.station text {
    font: italic 23px Roboto, sans-serif;
    fill: #1fb828;
    text-anchor: middle;
}

.box-text text {
    fill: #1fa830;
    text-anchor: middle;
}

.box-text .serif {
    font-size: 16px;
}

.box-text .pc {
    font: 16px "Liberation Sans", sans-serif;
    fill: #18d020;
}

.tag-text {
    font-size: 10px;
    fill: #1fd02c;
    text-anchor: end;
}

/* signal lists placed next to their station */
.io {
    position: absolute;
    display: grid;
    grid-template-columns: 96px 24px;
    gap: 4px 6px;
    font-size: 11px;
    line-height: 12px;
}

.io.wide {
    grid-template-columns: 96px 32px;
}

.io.tight {
    row-gap: 2px;
}

.io dt {
    color: #f08a1c;
    text-align: right;
    white-space: nowrap;
}

.io dt.ack {
    color: #1cdfe0;
}

.io dd {
    height: 12px;
    background: #1ac01e;
    color: #f0fff0;
    font: 10px/12px "Liberation Mono", monospace;
    text-align: center;
}

.io dd.bad {
    background: #f00000;
}

.io-03 { left: 73px; top: 124px; }
.io-scale { left: 1059px; top: 123px; }
.io-06 { left: 268px; top: 42px; }
.io-07 { left: 546px; top: 56px; }
.io-10 { left: 662px; top: 56px; }
.io-12 { left: 928px; top: 47px; }
.io-02 { left: 67px; top: 328px; row-gap: 5px; }
.io-codes { left: 1229px; top: 48px; row-gap: 10px; }
.io-14 { left: 926px; top: 323px; }
.io-15 { left: 1043px; top: 323px; }
.io-14-1 { left: 687px; top: 352px; }
.io-14-2a { left: 806px; top: 352px; }
.io-14-2b { left: 927px; top: 368px; }
.io-15-3 { left: 1043px; top: 352px; }
.io-15-4 { left: 1149px; top: 368px; }
.io-15-5 { left: 1280px; top: 368px; }

/* alarm line */
.alarm {
    height: 21px;
    display: flex;
    align-items: center;
    gap: 3px;
    padding-left: 1px;
    background: #f0edec;
    border-bottom: 1px solid #fff;
    font: 12px "Noto Sans CJK SC", sans-serif;
}

.alarm .idle {
    color: #1b7fc4;
    margin-right: 3px;
}

.alarm .fault {
    color: #f01010;
}

.alarm .detail {
    color: #f5961e;
    margin-left: 5px;
}

/* tabs */
.tabs {
    height: 25px;
    display: flex;
    align-items: flex-end;
    padding-left: 2px;
    border-bottom: 1px solid #8b939c;
}

.tabs button {
    width: 71px;
    height: 18px;
    padding: 0 4px;
    text-align: left;
    line-height: 18px;
    border: 1px solid #8b939c;
    border-bottom: none;
    background: linear-gradient(#f2f2f2, #d3d3d3);
}

.tabs .active {
    width: 76px;
    height: 21px;
    padding: 0 7px 1px;
    margin-bottom: -1px;
    background: #fff;
}

.panel {
    flex: 1;
    min-height: 0;
    display: flex;
    flex-direction: column;
    padding: 1px 4px 0 3px;
    background: #f4f7fa;
    border-left: 1px solid #8b939c;
    border-bottom: 1px solid #8b939c;
}

/* filter form */
.filter {
    height: 76px;
    display: flex;
    flex-direction: column;
    gap: 6px;
    padding: 10px 0 0 14px;
    background: linear-gradient(#d9e3ee, #dce6ef);
}

.filter-row {
    display: flex;
    align-items: center;
    height: 20px;
}

.filter-row label {
    width: 47px;
    white-space: nowrap;
}

.filter-row .mid {
    width: 66px;
    padding-right: 4px;
    text-align: right;
}

.filter-row input[type="text"] {
    width: 98px;
    height: 20px;
    border: none;
    border-top: 1px solid #a9b0b8;
    background: #fff;
}

input[type="checkbox"] {
    appearance: none;
    width: 13px;
    height: 13px;
    border: 1px solid #8a8f94;
    background: linear-gradient(135deg, #c8ccd0, #fff);
    box-shadow: inset 0 0 0 1px #f4f4f4;
}

.filter-row input[type="checkbox"] {
    margin: 2px 4px 0 7px;
}

.filter-row input[type="checkbox"] + label {
    width: 57px;
}

.filter-row .state {
    width: 53px;
    padding-left: 18px;
}

.filter-row .done {
    margin-left: 18px;
}

.drop {
    position: relative;
    width: 79px;
    height: 20px;
}

.drop::after {
    content: "";
    position: absolute;
    right: 4px;
    top: 9px;
    border: 4px solid transparent;
    border-top-color: #000;
    border-bottom: none;
}

.drop select {
    appearance: none;
    width: 100%;
    height: 20px;
    padding-left: 1px;
    border: none;
    border-top: 1px solid #a9b0b8;
    background: #fff;
    font: 10px "Liberation Mono", "Noto Sans CJK SC", monospace;
}

.state-drop {
    width: 73px;
    margin-right: 11px;
}

.state-drop select {
    font: 12px "Liberation Serif", "Noto Sans CJK SC", serif;
}

.query {
    display: flex;
    align-items: center;
    gap: 4px;
    width: 69px;
    height: 21px;
    margin: 2px 0 0 99px;
    padding-left: 3px;
    border: 1px solid #3c7fb1;
    border-radius: 3px;
    background: linear-gradient(#e8f5fc 45%, #bee6fd 50%, #a7d9f5);
    font: 12px "Noto Sans CJK SC", sans-serif;
}

/* row actions */
.actions {
    height: 25px;
    display: flex;
    align-items: center;
    gap: 6px;
    padding: 0 0 2px 3px;
    background: linear-gradient(#fafafb, #f1f1f3);
    font: 12px "Noto Sans CJK SC", sans-serif;
}

.actions .grip {
    height: 14px;
}

.actions button {
    display: flex;
    align-items: center;
    gap: 2px;
}

.actions button + button {
    margin-left: 2px;
}

/* table */
.grid {
    flex: 1;
    min-height: 0;
    overflow: hidden;
    background: #fff;
    border: 1px solid #80868c;
}

table {
    width: 100%;
    table-layout: fixed;
    border-collapse: separate;
    border-spacing: 0;
}

.c-id { width: 151px; }
.c-m { width: 150px; }
.c-s { width: 100px; }
.c-t { width: 160px; }

th {
    height: 24px;
    padding-top: 2px;
    font-weight: normal;
    background: linear-gradient(#fff, #f1f2f3);
    border-right: 1px solid #dedfe1;
    border-bottom: 1px solid #d0d0d0;
}

th:first-child {
    padding-left: 6px;
    text-align: left;
}

td {
    height: 17px;
    padding-top: 2px;
    font: 10px/14px "Liberation Mono", monospace;
    text-align: center;
    border-right: 1px solid #ececec;
    border-bottom: 1px solid #ececec;
}

td:first-child {
    padding-left: 22px;
    text-align: left;
}

td:nth-child(6) {
    padding-top: 0;
    font: 12px/16px "Noto Sans CJK SC", sans-serif;
}

/* pager */
.pager {
    height: 41px;
    display: flex;
    align-items: center;
    gap: 6px;
    padding: 0 19px 0 3px;
    font: 12px "Noto Sans", "Noto Sans CJK SC", sans-serif;
}

.pager input {
    width: 60px;
    height: 23px;
    text-align: center;
    border: 1px solid #d5dae0;
    border-top-color: #abb0b8;
    background: #fff;
}

.pager .total {
    margin-left: auto;
    margin-right: -4px;
    white-space: nowrap;
}

.nav {
    display: flex;
    gap: 9px;
    margin-left: 2px;
}

.nav button {
    width: 14px;
    height: 14px;
    border-radius: 4px;
    background: #b9bcc0;
}

.nav svg {
    display: block;
    fill: none;
    stroke: #fff;
    stroke-width: 1.5;
}

/* status bar */
.statusbar {
    height: 26px;
    display: flex;
    align-items: center;
    position: relative;
    padding-left: 14px;
    background: #f4f8fb;
    color: #3b4f97;
    font: bold 12px "Noto Sans", "Noto Sans CJK SC", sans-serif;
}

.statusbar label {
    margin-left: 4px;
}

.conn {
    margin-left: 15px;
}

.conn + .badge {
    margin-left: 9px;
}

.badge + .conn {
    margin-left: 11px;
}

.badge {
    width: 32px;
    align-self: stretch;
    margin-top: 5px;
    padding-top: 1px;
    text-align: center;
    line-height: 17px;
    color: #fff;
}

.badge.red { background: #f00; }
.badge.green { background: #008000; }

.welcome {
    flex: 1;
    padding-left: 676px;
    font-style: italic;
    color: #3f78ad;
}

.clock {
    margin-right: 5px;
    font: bold 12px "DejaVu Sans", "Noto Sans CJK SC", sans-serif;
}

/* strip of the taskbar below the window */
.taskbar {
    height: 9px;
    display: flex;
    overflow: hidden;
    border-top: 1px solid #2a1d16;
    background: linear-gradient(90deg, #8f725e, #a98467 400px, #9a7350 1200px, #6a4f3c);
}

.taskbar svg {
    margin: 0 20px 0 0;
}

.taskbar i {
    width: 43px;
    height: 12px;
    margin-right: 3px;
    border: 1px solid #3b2c24;
    border-radius: 3px 3px 0 0;
    background: linear-gradient(#d8c8bc, #a98e7c);
}

.gadget {
    position: absolute;
    right: 0;
    bottom: 23px;
    width: 10px;
    height: 59px;
    border: 2px solid #4b5160;
    border-left-width: 3px;
    border-radius: 4px 0 0 4px;
    background: linear-gradient(#2d3340 50%, #5cc080 55%, #3f8f9a);
}

/* what shows of the desktop to the right */
.edge {
    width: 8px;
    display: flex;
    flex-direction: column;
}

.e-black { height: 74px; background: #000; }
.e-blue { height: 56px; background: #2b579a; }
.e-light { height: 93px; background: #f0f0f0; }
.e-white { height: 618px; background: #e6e6e6; }
.e-rest { flex: 1; background: #000; }

.watermark {
    position: absolute;
    right: 3px;
    bottom: 0;
    color: #d5d5d5;
    font: 17px/18px "Noto Sans CJK SC", sans-serif;
    text-shadow: 1px 1px 1px #444;
}
```
